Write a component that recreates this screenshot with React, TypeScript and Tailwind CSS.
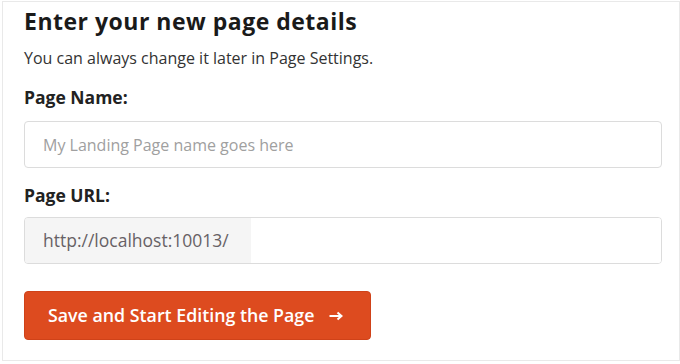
export default function App() {
  return (
    <div className="h-[364px] w-[680px] bg-white pl-[2px] pt-[1px] font-['Open_Sans',sans-serif]">
      <div className="h-[360px] w-[678px] border border-[#e9e9e9] pl-[21px] pr-[17px] pt-[4px]">
        <h1 className="text-[23px] leading-[30px] font-bold tracking-[0.5px] text-[#1a1a1a]">
          Enter your new page details
        </h1>
        <p className="mt-[11px] text-[16px] leading-[22px] text-[#333]">
          You can always change it later in Page Settings.
        </p>

        <label className="mt-[16px] block text-[17.5px] leading-[24px] font-bold text-[#222]">Page Name:</label>
        <div className="mt-[12px] flex h-[47px] items-center rounded-[4px] border border-[#dcdcdc] px-[18px]">
          <input
            type="text"
            placeholder="My Landing Page name goes here"
            className="w-full bg-transparent text-[16px] text-[#333] outline-none placeholder:text-[#a0a0a0]"
          />
        </div>

        <label className="mt-[15px] block text-[17.5px] leading-[24px] font-bold text-[#222]">Page URL:</label>
        <div className="mt-[10px] flex h-[47px] overflow-hidden rounded-[4px] border border-[#dcdcdc]">
          <span className="flex w-[226px] items-center bg-[#f5f5f5] pl-[18px] text-[17.5px] text-[#676165]">
            http://localhost:10013/
          </span>
          <input type="text" className="flex-1 bg-white px-3 text-[16px] outline-none" />
        </div>

        <button
          type="button"
          className="mt-[27px] flex h-[49px] w-[347px] items-center rounded-[4px] border border-[#cf4219] bg-[#dd4b1f] pl-[23px] text-[17.8px] font-semibold text-white"
        >
          Save and Start Editing the Page
          <svg width="14" height="10" viewBox="0 0 14 10" className="ml-[15px]" fill="none">
            <path d="M0.5 5H12" stroke="white" strokeWidth="2" />
            <path d="M8.5 1.5L12.5 5L8.5 8.5" stroke="white" strokeWidth="2" />
          </svg>
        </button>
      </div>
    </div>
  );
}
